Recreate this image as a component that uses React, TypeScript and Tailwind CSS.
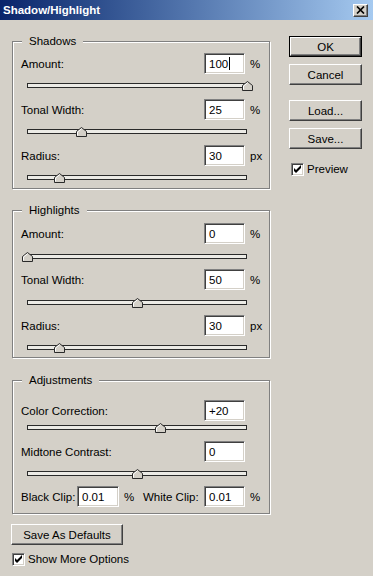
import type { CSSProperties, ReactNode } from "react";

const raised =
  "border border-t-white border-l-white border-r-[#404040] border-b-[#404040] shadow-[inset_-1px_-1px_0_#808080] bg-[#d4d0c8]";
const sunken =
  "border border-t-[#808080] border-l-[#808080] border-r-white border-b-white shadow-[inset_1px_1px_0_#404040,inset_-1px_-1px_0_#d4d0c8] bg-white";

function Field({ value, caret, w = "w-[41px]" }: { value: string; caret?: boolean; w?: string }) {
  return (
    <div className={`${sunken} ${w} h-[21px] flex items-center pl-[4px]`}>
      {value}
      {caret && <span className="inline-block w-px h-[13px] bg-black ml-px" />}
    </div>
  );
}

function Row({ label, value, unit, caret }: { label: string; value: string; unit: string; caret?: boolean }) {
  return (
    <div className="flex items-center h-[21px]">
      <span className="w-[183px]">{label}</span>
      <Field value={value} caret={caret} />
      <span className="ml-[5px]">{unit}</span>
    </div>
  );
}

// at = thumb centre, px from the left end of the track
function Slider({ at, box }: { at: number; box: string }) {
  const style: CSSProperties = { left: at - 6 };
  return (
    <div className={`${box} pl-[6px]`}>
      <div className="relative w-[220px] h-[5px] border border-[#2a2a2a] bg-[#ecebe6]">
        <svg className="absolute top-[-3px]" style={style} width="11" height="10" viewBox="0 0 11 10">
          <path d="M0.5 9.5V4.5L5.5 0.5L10.5 4.5V9.5Z" fill="#d4d0c8" stroke="#2a2a2a" />
          <path d="M1.5 8.5V5L5.5 1.8" fill="none" stroke="#fff" />
        </svg>
      </div>
    </div>
  );
}

function Group({ title, className, children }: { title: string; className: string; children: ReactNode }) {
  return (
    <fieldset className={`border border-[#808080] shadow-[1px_1px_0_#fff,inset_1px_1px_0_#fff] min-w-0 ${className}`}>
      <legend className="ml-[9px] px-[7px] leading-[14px] bg-[#d4d0c8]">{title}</legend>
      {children}
    </fieldset>
  );
}

function Btn({ children, w, isDefault }: { children: ReactNode; w: string; isDefault?: boolean }) {
  const inner = (
    <div className={`${raised} h-full w-full flex items-center justify-center`}>{children}</div>
  );
  return isDefault ? (
    <div className={`${w} h-[21px] border border-black`}>{inner}</div>
  ) : (
    <div className={`${w} h-[21px]`}>{inner}</div>
  );
}

function Check({ label, className }: { label: string; className: string }) {
  return (
    <div className={`flex items-center gap-[3px] ${className}`}>
      <div className={`${sunken} w-[13px] h-[13px]`}>
        <svg width="11" height="11" viewBox="0 0 11 11">
          <path d="M2 4L4 6L9 1V4L4 9L2 7Z" fill="#000" />
        </svg>
      </div>
      <span>{label}</span>
    </div>
  );
}

export default function App() {
  return (
    <div className="w-[373px] h-[576px] bg-[#d4d0c8] text-black text-[11.5px] leading-[14px] font-['Liberation_Sans',Arial,sans-serif] overflow-hidden">
      <div className="h-[20px] flex items-center justify-between pl-[3px] pr-[5px] bg-gradient-to-r from-[#0a246a] to-[#a6caf0]">
        <span className="text-white font-bold text-[11.5px]">Shadow/Highlight</span>
        <div className={`${raised} w-[15px] h-[13px] flex items-center justify-center`}>
          <svg width="9" height="8" viewBox="0 0 9 8">
            <path d="M1 0.5L8 7.5M8 0.5L1 7.5" stroke="#000" strokeWidth="1.7" />
          </svg>
        </div>
      </div>

      <div className="flex pl-[12px]">
        <div className="w-[258px] pt-[14px] flex flex-col">
          <Group title="Shadows" className="">
            <div className="pl-[8px] pt-[5px]">
              <Row label="Amount:" value="100" unit="%" caret />
              <Slider at={220} box="h-[25px] pt-[9px]" />
              <Row label="Tonal Width:" value="25" unit="%" />
              <Slider at={54} box="h-[25px] pt-[9px]" />
              <Row label="Radius:" value="30" unit="px" />
              <Slider at={32} box="h-[22px] pt-[9px]" />
            </div>
          </Group>

          <Group title="Highlights" className="mt-[14px]">
            <div className="pl-[8px] pt-[6px]">
              <Row label="Amount:" value="0" unit="%" />
              <Slider at={0} box="h-[25px] pt-[10px]" />
              <Row label="Tonal Width:" value="50" unit="%" />
              <Slider at={110} box="h-[25px] pt-[10px]" />
              <Row label="Radius:" value="30" unit="px" />
              <Slider at={32} box="h-[21px] pt-[9px]" />
            </div>
          </Group>

          <Group title="Adjustments" className="mt-[15px]">
            <div className="pl-[8px] pt-[13px] pb-[6px]">
              <Row label="Color Correction:" value="+20" unit="" />
              <Slider at={133} box="h-[20px] pt-[4px]" />
              <Row label="Midtone Contrast:" value="0" unit="" />
              <Slider at={110} box="h-[24px] pt-[9px]" />
              <div className="flex items-center h-[21px]">
                <span className="w-[56px]">Black Clip:</span>
                <Field value="0.01" w="w-[42px]" />
                <span className="ml-[5px] w-[19px]">%</span>
                <span className="w-[61px]">White Clip:</span>
                <Field value="0.01" />
                <span className="ml-[5px]">%</span>
              </div>
            </div>
          </Group>

          <div className="mt-[10px] -ml-px">
            <Btn w="w-[112px]">Save As Defaults</Btn>
          </div>
          <Check label="Show More Options" className="mt-[7px]" />
        </div>

        <div className="ml-[19px] w-[73px] pt-[16px] flex flex-col">
          <Btn w="w-[73px]" isDefault>OK</Btn>
          <div className="mt-[7px]">
            <Btn w="w-[73px]">Cancel</Btn>
          </div>
          <div className="mt-[15px]">
            <Btn w="w-[73px]">Load...</Btn>
          </div>
          <div className="mt-[7px]">
            <Btn w="w-[73px]">Save...</Btn>
          </div>
          <Check label="Preview" className="mt-[13px] ml-[2px]" />
        </div>
      </div>
    </div>
  );
}
